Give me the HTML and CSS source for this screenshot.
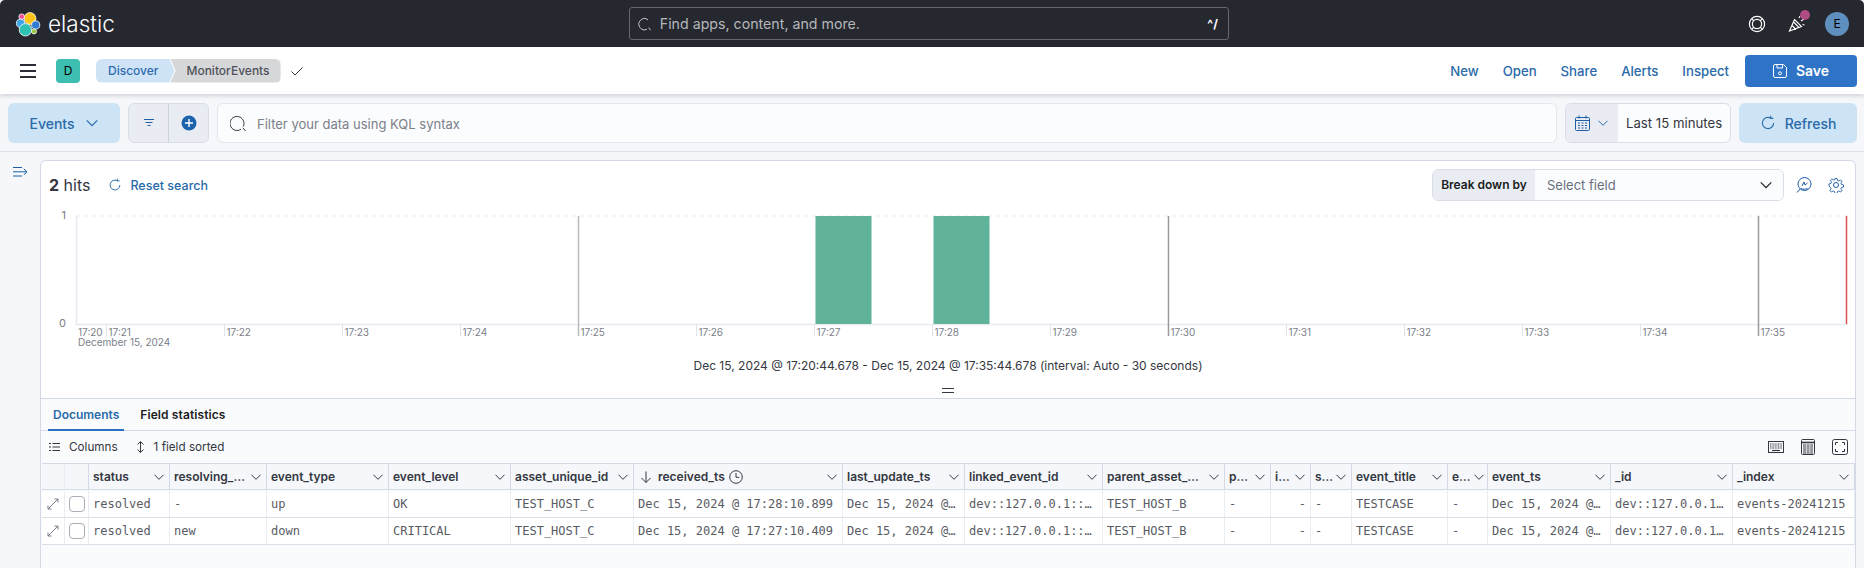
FILE: index.html
```html
<!DOCTYPE html>
<html lang="en">
<head>
  <meta charset="UTF-8">
  <title>Discover - Elastic</title>
  <link rel="stylesheet" href="styles.css">
</head>
<body>
  <svg class="sprites" width="0" height="0">
    <symbol id="chev" viewBox="0 0 12 12"><path d="M1.500 3.800 6 8.300l4.500-4.500" fill="none" stroke="currentColor" stroke-width="1"/></symbol>
    <symbol id="refresh" viewBox="0 0 16 16"><path d="M13.600 8A5.600 5.600 0 1 1 10.500 3M10.700 .8v2.600H13.300" fill="none" stroke="currentColor" stroke-width="1.100"/></symbol>
  </svg>

  <header class="global-bar">
    <div class="brand">
      <svg class="logo" width="26" height="26" viewBox="15 10 26 26">
        <g stroke="#fff" stroke-width=".8">
          <circle cx="30" cy="17.500" r="5.900" fill="#fec514"/>
          <circle cx="21.700" cy="15.700" r="2.800" fill="#f04e98"/>
          <circle cx="20.500" cy="22.300" r="4.100" fill="#3ca5e8"/>
          <circle cx="35.700" cy="24" r="4.100" fill="#2f7dd1"/>
          <circle cx="25.400" cy="28.800" r="6.200" fill="#2fc1b4"/>
          <circle cx="34" cy="30.400" r="2.500" fill="#93c83e"/>
        </g>
      </svg>
      <span class="brand-name">elastic</span>
    </div>
    <div class="global-search">
      <svg width="14" height="14" viewBox="0 0 14 14"><path d="M9 12.200A5.600 5.600 0 1 1 10 2.800M10.600 10.600l2 2.600" fill="none" stroke="#c4c6c9" stroke-width="1"/></svg>
      <span class="global-search-text">Find apps, content, and more.</span>
      <span class="shortcut">^/</span>
    </div>
    <div class="global-icons">
      <svg width="18" height="18" viewBox="0 0 18 18" fill="none" stroke="#fff" stroke-width="1.200"><circle cx="9" cy="9" r="7.600"/><circle cx="9" cy="9" r="4.600"/><path d="M3.700 3.700l2.100 2.100M14.300 3.700l-2.100 2.100M3.700 14.300l2.100-2.100M14.300 14.300l-2.100-2.100"/></svg>
      <span class="news">
        <svg width="18" height="18" viewBox="0 0 18 18" fill="none" stroke="#fff" stroke-width="1.100"><path d="M1.500 16 6.500 4.500l7 7zM4 10.500l4 4M5.500 7l5 5M11 3l1-2M13 6l3-2M14.500 9.500l2 .5"/></svg>
        <span class="news-dot"></span>
      </span>
      <span class="user-avatar">E</span>
    </div>
  </header>

  <nav class="app-bar">
    <button class="menu-btn"><span></span><span></span><span></span></button>
    <span class="space-badge">D</span>
    <div class="crumbs">
      <span class="crumb crumb-first">Discover</span>
      <span class="crumb crumb-last">MonitorEvents</span>
    </div>
    <svg class="crumb-check" width="12" height="12" viewBox="0 0 12 12"><path d="M.5 6.500 4 10 11.500 2.500" fill="none" stroke="#343741" stroke-width="1"/></svg>
    <div class="app-actions">
      <a>New</a><a>Open</a><a>Share</a><a>Alerts</a><a>Inspect</a>
      <button class="save-btn">
        <svg width="14" height="14" viewBox="0 0 14 14" fill="none" stroke="#fff" stroke-width="1"><path d="M.5 2A1.500 1.500 0 0 1 2 .5h8.500l3 3V12a1.500 1.500 0 0 1-1.500 1.500H2A1.500 1.500 0 0 1 .5 12zM4 .5v3.500h5.500V.5"/><circle cx="7" cy="9.300" r="1.500"/></svg>
        Save
      </button>
    </div>
  </nav>

  <section class="query-bar">
    <button class="events-btn">Events <svg width="14" height="14"><use href="#chev"/></svg></button>
    <div class="filter-group">
      <span class="filter-cell">
        <svg width="12" height="12" viewBox="0 0 12 12"><path d="M1 2.500h10M2.500 5.500h7M4.500 8.500h3" stroke="#1d5ea5" stroke-width="1"/></svg>
      </span>
      <span class="filter-cell">
        <svg width="16" height="16" viewBox="0 0 16 16"><circle cx="8" cy="8" r="7.500" fill="#1d64ad"/><path d="M8 4v8M4 8h8" stroke="#fff" stroke-width="1.400"/></svg>
      </span>
    </div>
    <div class="kql-input">
      <svg width="17" height="17" viewBox="0 0 17 17"><path d="M11 14.200A7 7 0 1 1 13.300 11.500M12.800 12.800l2.800 3.200" fill="none" stroke="#343741" stroke-width="1"/></svg>
      <span>Filter your data using KQL syntax</span>
    </div>
    <div class="date-group">
      <span class="date-icon">
        <svg width="15" height="16" viewBox="0 0 15 16" fill="none" stroke="#1d5ea5"><rect x=".5" y="2.500" width="14" height="13" rx="1"/><path d="M.5 5.500h14M4 .5v3M11 .5v3"/><path d="M3 8h2M6.500 8h2M10 8h2M3 10.500h2M6.500 10.500h2M10 10.500h2M3 13h2M6.500 13h2M10 13h2" stroke-width="1.200"/></svg>
        <svg class="date-chev" width="12" height="12"><use href="#chev"/></svg>
      </span>
      <span class="date-text">Last 15 minutes</span>
    </div>
    <button class="refresh-btn"><svg width="16" height="16"><use href="#refresh"/></svg> Refresh</button>
  </section>

  <main class="workspace">
    <aside class="side-toggle">
      <svg width="15" height="12" viewBox="0 0 15 12" fill="none" stroke="#1d5ea5" stroke-width="1"><path d="M0 1.500h9M0 5.800h14M0 10h9M10.800 2.800 14 5.800l-3.200 3"/></svg>
    </aside>
    <div class="panel">
      <div class="hits-row">
        <span class="hits"><b>2</b> hits</span>
        <a class="reset-link"><svg width="14" height="14"><use href="#refresh"/></svg> Reset search</a>
        <div class="breakdown">
          <span class="breakdown-label">Break down by</span>
          <span class="breakdown-select">Select field <svg width="14" height="14"><use href="#chev"/></svg></span>
        </div>
        <svg class="hits-icon" width="16" height="16" viewBox="0 0 16 16" fill="none" stroke="#1d5ea5"><circle cx="8.500" cy="7" r="6.500"/><path d="M1 15.500l3-3.500M6 9l2-4 1 3 2.500-2M5 11.500c2 1 4 1 6.500 0"/></svg>
        <svg class="hits-icon" width="16" height="16" viewBox="0 0 16 16" fill="none" stroke="#1d5ea5"><circle cx="8" cy="8" r="2.500"/><path d="M6.800.8h2.400l.5 2.200 1.400.6 2-1.200 1.600 1.600-1.200 2 .6 1.400 2.200.5v2.400l-2.200.5-.6 1.400 1.200 2-1.600 1.600-2-1.200-1.400.6-.5 2.200H6.800l-.5-2.200-1.400-.6-2 1.200-1.600-1.600 1.200-2-.6-1.400L.2 9.200V6.800l2.200-.5.600-1.400-1.200-2 1.600-1.600 2 1.200 1.400-.6z" transform="translate(.8 .8) scale(.9)"/></svg>
      </div>

      <svg class="chart" width="1814" height="148" viewBox="41 202 1814 148">
        <path class="grid-top" d="M76 216H1848"/>
        <path class="axis" d="M76.500 216V324.500H1848"/>
        <rect class="bar" x="815.500" y="216" width="56" height="108"/>
        <rect class="bar" x="933.500" y="216" width="56" height="108"/>
        <path class="tick" d="M106.500 324v12M224.500 324v12M342.500 324v12M460.500 324v12M696.500 324v12M814.500 324v12M932.500 324v12M1050.500 324v12M1286.500 324v12M1404.500 324v12M1522.500 324v12M1640.500 324v12"/>
        <path class="five-min" d="M578.500 216V336"/>
        <path class="five-min dark" d="M1168.500 216V336"/>
        <path class="five-min dark" d="M1758.500 216V336"/>
        <path class="now-line" d="M1846.500 216V324"/>
        <g class="y-labels">
          <text x="66" y="219">1</text>
          <text x="66" y="327">0</text>
        </g>
        <g class="x-labels">
          <text x="78" y="336">17:20</text>
          <text x="108.500" y="336">17:21</text>
          <text x="226.500" y="336">17:22</text>
          <text x="344.500" y="336">17:23</text>
          <text x="462.500" y="336">17:24</text>
          <text x="580.500" y="336">17:25</text>
          <text x="698.500" y="336">17:26</text>
          <text x="816.500" y="336">17:27</text>
          <text x="934.500" y="336">17:28</text>
          <text x="1052.500" y="336">17:29</text>
          <text x="1170.500" y="336">17:30</text>
          <text x="1288.500" y="336">17:31</text>
          <text x="1406.500" y="336">17:32</text>
          <text x="1524.500" y="336">17:33</text>
          <text x="1642.500" y="336">17:34</text>
          <text x="1760.500" y="336">17:35</text>
          <text x="78" y="346">December 15, 2024</text>
        </g>
      </svg>

      <p class="range-caption">Dec 15, 2024 @ 17:20:44.678 - Dec 15, 2024 @ 17:35:44.678 (interval: Auto - 30 seconds)</p>
      <div class="resize-handle"><span></span></div>

      <div class="results">
        <div class="tabs">
          <a class="tab active">Documents</a>
          <a class="tab">Field statistics</a>
        </div>
        <div class="grid-toolbar">
          <span class="tool">
            <svg width="11" height="10" viewBox="0 0 11 10" stroke="#343741"><path d="M0 1.500h2M0 5h2M0 8.500h2M3.500 1.500H11M3.500 5H11M3.500 8.500H11"/></svg>
            Columns
          </span>
          <span class="tool">
            <svg width="9" height="12" viewBox="0 0 9 12" fill="none" stroke="#343741"><path d="M4.500 1v10M1.500 3.500l3-3 3 3M1.500 8.500l3 3 3-3"/></svg>
            1 field sorted
          </span>
          <div class="tool-right">
            <svg width="16" height="12" viewBox="0 0 16 12" fill="none" stroke="#343741"><rect x=".5" y=".5" width="15" height="11"/><path d="M2 3h12M2 5h12M2 7h12" stroke-dasharray="1 .6" stroke-width="1.200"/><path d="M4 9.500h8" stroke-width="1.200"/></svg>
            <svg width="16" height="16" viewBox="0 0 16 16" fill="none" stroke="#343741"><rect x="1.500" y=".5" width="13" height="15" rx="1"/><path d="M1.500 3.500h13" stroke-width="1.600"/><path d="M3 6h10M3 8h10M3 10h10M3 12h10M3 14h10" stroke-dasharray="3 .6"/></svg>
            <svg width="16" height="16" viewBox="0 0 16 16" fill="none" stroke="#343741"><rect x=".5" y=".5" width="15" height="15" rx="2"/><path d="M3.500 6V3.500H6M10 3.500h2.500V6M12.500 10v2.500H10M6 12.500H3.500V10"/></svg>
          </div>
        </div>

        <div class="data-grid">
          <div class="hd"></div>
          <div class="hd"></div>
          <div class="hd"><span>status</span><svg><use href="#chev"/></svg></div>
          <div class="hd"><span>resolving_…</span><svg><use href="#chev"/></svg></div>
          <div class="hd"><span>event_type</span><svg><use href="#chev"/></svg></div>
          <div class="hd"><span>event_level</span><svg><use href="#chev"/></svg></div>
          <div class="hd"><span>asset_unique_id</span><svg><use href="#chev"/></svg></div>
          <div class="hd hd-sorted">
            <svg class="sort-arrow" viewBox="0 0 12 12"><path d="M6 .5v11M1.500 7 6 11.500 10.500 7" fill="none" stroke="currentColor"/></svg>
            <span>received_ts</span>
            <svg class="clock" viewBox="0 0 14 14"><circle cx="7" cy="7" r="6.300" fill="none" stroke="currentColor"/><path d="M7 3v4.300h3.300" fill="none" stroke="currentColor"/></svg>
            <svg class="push"><use href="#chev"/></svg>
          </div>
          <div class="hd"><span>last_update_ts</span><svg><use href="#chev"/></svg></div>
          <div class="hd"><span>linked_event_id</span><svg><use href="#chev"/></svg></div>
          <div class="hd"><span>parent_asset_…</span><svg><use href="#chev"/></svg></div>
          <div class="hd"><span>p…</span><svg><use href="#chev"/></svg></div>
          <div class="hd"><span>i…</span><svg><use href="#chev"/></svg></div>
          <div class="hd"><span>s…</span><svg><use href="#chev"/></svg></div>
          <div class="hd"><span>event_title</span><svg><use href="#chev"/></svg></div>
          <div class="hd"><span>e…</span><svg><use href="#chev"/></svg></div>
          <div class="hd"><span>event_ts</span><svg><use href="#chev"/></svg></div>
          <div class="hd"><span>_id</span><svg><use href="#chev"/></svg></div>
          <div class="hd"><span>_index</span><svg><use href="#chev"/></svg></div>

          <div class="td td-ctl"><svg width="12" height="12" viewBox="0 0 12 12" fill="none" stroke="#69707d"><path d="M1 11 11 1M1 7.500V11h3.500M7.500 1H11v3.500" stroke-width=".9"/></svg></div>
          <div class="td td-ctl"><span class="check"></span></div>
          <div class="td">resolved</div>
          <div class="td">-</div>
          <div class="td">up</div>
          <div class="td">OK</div>
          <div class="td">TEST_HOST_C</div>
          <div class="td">Dec 15, 2024 @ 17:28:10.899</div>
          <div class="td">Dec 15, 2024 @…</div>
          <div class="td">dev::127.0.0.1::…</div>
          <div class="td">TEST_HOST_B</div>
          <div class="td">-</div>
          <div class="td td-num">-</div>
          <div class="td">-</div>
          <div class="td">TESTCASE</div>
          <div class="td">-</div>
          <div class="td">Dec 15, 2024 @…</div>
          <div class="td">dev::127.0.0.1…</div>
          <div class="td">events-20241215</div>

          <div class="td td-ctl"><svg width="12" height="12" viewBox="0 0 12 12" fill="none" stroke="#69707d"><path d="M1 11 11 1M1 7.500V11h3.500M7.500 1H11v3.500" stroke-width=".9"/></svg></div>
          <div class="td td-ctl"><span class="check"></span></div>
          <div class="td">resolved</div>
          <div class="td">new</div>
          <div class="td">down</div>
          <div class="td">CRITICAL</div>
          <div class="td">TEST_HOST_C</div>
          <div class="td">Dec 15, 2024 @ 17:27:10.409</div>
          <div class="td">Dec 15, 2024 @…</div>
          <div class="td">dev::127.0.0.1::…</div>
          <div class="td">TEST_HOST_B</div>
          <div class="td">-</div>
          <div class="td td-num">-</div>
          <div class="td">-</div>
          <div class="td">TESTCASE</div>
          <div class="td">-</div>
          <div class="td">Dec 15, 2024 @…</div>
          <div class="td">dev::127.0.0.1…</div>
          <div class="td">events-20241215</div>
        </div>
      </div>
    </div>
  </main>
</body>
</html>
```

FILE: styles.css
```css
* {
  box-sizing: border-box;
}
html, body {
  height: 100%;
}
body {
  margin: 0;
  height: 568px;
  overflow: hidden;
  display: flex;
  flex-direction: column;
  font-family: Inter, "Liberation Sans", sans-serif;
  font-size: 14px;
  color: #343741;
  background-color: #f5f7fa;
}
button {
  font-family: inherit;
  border: none;
  cursor: pointer;
}
.sprites {
  position: absolute;
}

/* top dark bar */
.global-bar {
  height: 47px;
  flex: none;
  display: flex;
  align-items: center;
  background-color: #25282f;
  border-radius: 5px 5px 0 0;
  position: relative;
}
.brand {
  display: flex;
  align-items: center;
  margin-left: 15px;
  gap: 7px;
}
.brand-name {
  color: #fff;
  font-size: 22.500px;
  font-weight: 300;
}
.global-search {
  width: 600px;
  height: 33px;
  margin-left: 514px;
  padding: 0 10px 0 8px;
  display: flex;
  align-items: center;
  border: 1px solid #64676c;
  border-radius: 3px;
}
.global-search-text {
  margin-left: 8px;
  color: #b5b7bb;
  font-size: 14.200px;
  flex: 1;
}
.shortcut {
  color: #fff;
  font-size: 12px;
  font-weight: 700;
}
.global-icons {
  margin-left: auto;
  margin-right: 15px;
  display: flex;
  align-items: center;
  gap: 22px;
}
.news {
  position: relative;
  display: flex;
  margin-right: -3px;
}
.news-dot {
  position: absolute;
  top: -5px;
  right: -4px;
  width: 10px;
  height: 10px;
  border-radius: 50%;
  background-color: #b04c84;
}
.user-avatar {
  width: 24px;
  height: 24px;
  border-radius: 50%;
  background-color: #5f8fbf;
  color: #000;
  font-size: 12px;
  line-height: 24px;
  text-align: center;
}

/* white app bar */
.app-bar {
  height: 47px;
  flex: none;
  display: flex;
  align-items: center;
  background-color: #fff;
  box-shadow: 0 2px 4px rgba(52, 55, 65, 0.18);
  position: relative;
}
.menu-btn {
  width: 16px;
  margin-left: 20px;
  padding: 0;
  background: none;
  display: flex;
  flex-direction: column;
  gap: 4px;
}
.menu-btn span {
  height: 2px;
  background-color: #2b2e36;
}
.space-badge {
  width: 24px;
  height: 24px;
  margin-left: 20px;
  border-radius: 4px;
  background-color: #3ebeb0;
  color: #000;
  font-size: 12px;
  line-height: 24px;
  text-align: center;
}
.crumbs {
  display: flex;
  margin-left: 16px;
  font-size: 12px;
}
.crumb {
  height: 24px;
  line-height: 24px;
  font-weight: 500;
}
.crumb-first {
  padding: 0 16px 0 12px;
  color: #2e6bb0;
  background-color: #cfe3f6;
  border-radius: 6px 0 0 6px;
  clip-path: polygon(0 0, calc(100% - 5px) 0, 100% 50%, calc(100% - 5px) 100%, 0 100%);
}
.crumb-last {
  margin-left: -4px;
  padding: 0 11px 0 16px;
  color: #4f525a;
  background-color: #d6d7d9;
  border-radius: 0 6px 6px 0;
  clip-path: polygon(0 0, 100% 0, 100% 100%, 0 100%, 5px 50%);
}
.crumb-check {
  margin-left: 10px;
}
.app-actions {
  margin-left: auto;
  margin-right: 7px;
  display: flex;
  align-items: center;
  gap: 24px;
  font-size: 13.200px;
}
.app-actions a {
  color: #2a6aa9;
  font-weight: 500;
}
.save-btn {
  width: 112px;
  height: 32px;
  margin-left: -8px;
  display: flex;
  align-items: center;
  justify-content: center;
  gap: 9px;
  background-color: #2e73c5;
  color: #fff;
  font-size: 14px;
  font-weight: 600;
  border-radius: 4px;
}

/* query bar */
.query-bar {
  height: 58px;
  flex: none;
  padding: 9px 7px 8px 8px;
  display: flex;
  gap: 8px;
  border-bottom: 1px solid #dcdfe8;
}
.query-bar > * {
  height: 40px;
}
.events-btn {
  width: 112px;
  display: flex;
  align-items: center;
  justify-content: center;
  gap: 10px;
  background-color: #cce4f5;
  color: #2a6aa9;
  font-size: 14px;
  font-weight: 500;
  border-radius: 6px;
}
.filter-group {
  width: 81px;
  display: flex;
  border: 1px solid #d9dde8;
  border-radius: 6px;
  background-color: #e9edf3;
}
.filter-cell {
  flex: 1;
  display: flex;
  align-items: center;
  justify-content: center;
}
.filter-cell + .filter-cell {
  border-left: 1px solid #cfd3e0;
}
.kql-input {
  flex: 1;
  padding: 1px 0 0 12px;
  display: flex;
  align-items: center;
  gap: 10px;
  background-color: #fbfcfd;
  border: 1px solid #e4e7f0;
  border-radius: 6px;
  color: #7c8089;
  font-size: 13px;
}
.date-group {
  width: 166px;
  display: flex;
  align-items: center;
  border: 1px solid #d9dde8;
  border-radius: 6px;
  background-color: #fbfcfd;
  overflow: hidden;
}
.date-icon {
  width: 52px;
  height: 100%;
  padding-left: 9px;
  display: flex;
  align-items: center;
  gap: 7px;
  background-color: #e9edf3;
}
.date-chev {
  color: #2a6aa9;
}
.date-text {
  margin-left: 8px;
  color: #343741;
  font-size: 13.200px;
}
.refresh-btn {
  width: 118px;
  display: flex;
  align-items: center;
  justify-content: center;
  gap: 9px;
  background-color: #cce4f5;
  color: #2a6aa9;
  font-size: 14px;
  font-weight: 500;
  border-radius: 6px;
}

/* main area */
.workspace {
  flex: 1;
  display: flex;
  padding-top: 8px;
  padding-right: 8px;
  min-height: 0;
}
.side-toggle {
  width: 40px;
  flex: none;
  padding: 4px 0 0 13px;
}
.panel {
  flex: 1;
  display: flex;
  flex-direction: column;
  background-color: #fff;
  border: 1px solid #d3dae6;
  border-radius: 6px 6px 0 0;
  border-bottom: none;
  min-width: 0;
}
.hits-row {
  height: 41px;
  flex: none;
  padding: 8px 11px 0 8px;
  display: flex;
  align-items: flex-start;
}
.hits {
  font-size: 16px;
  line-height: 32px;
}
.reset-link {
  margin-left: 18px;
  display: flex;
  align-items: center;
  gap: 8px;
  height: 32px;
  color: #2a6aa9;
  font-size: 12.500px;
  font-weight: 500;
}
.breakdown {
  width: 352px;
  height: 32px;
  margin-left: auto;
  display: flex;
  border: 1px solid #d9dde8;
  border-radius: 6px;
  overflow: hidden;
}
.breakdown-label {
  width: 102px;
  line-height: 30px;
  text-align: center;
  background-color: #e9edf3;
  color: #1a1c21;
  font-size: 12px;
  font-weight: 600;
}
.breakdown-select {
  flex: 1;
  padding: 0 10px 0 12px;
  display: flex;
  align-items: center;
  justify-content: space-between;
  background-color: #fbfcfd;
  color: #69707d;
  font-size: 13px;
}
.breakdown-select svg {
  color: #1a1c21;
}
.hits-icon {
  margin: 8px 0 0 12px;
}
.hits-icon + .hits-icon {
  margin-left: 16px;
}
.chart {
  display: block;
  flex: none;
  font-family: Inter, sans-serif;
}
.grid-top {
  stroke: #e9ebf0;
  stroke-dasharray: 4 4;
  fill: none;
}
.axis {
  stroke: #e8eaf1;
  fill: none;
  stroke-width: 1.5;
}
.bar {
  fill: #60b29b;
}
.tick {
  stroke: #e0e3ea;
}
.five-min {
  stroke: #b9babd;
  stroke-width: 1.5;
}
.five-min.dark {
  stroke: #9a9b9e;
}
.now-line {
  stroke: #d9534f;
  stroke-width: 1.5;
}
.y-labels text {
  fill: #7b8088;
  font-size: 11px;
  text-anchor: end;
}
.x-labels text {
  fill: #7b8088;
  font-size: 10px;
}
.range-caption {
  height: 32px;
  flex: none;
  margin: 0;
  line-height: 32px;
  text-align: center;
  font-size: 12px;
  color: #343741;
}
.resize-handle {
  height: 17px;
  flex: none;
  padding-top: 6px;
  display: flex;
  justify-content: center;
  border-bottom: 1px solid #d3dae6;
}
.resize-handle span {
  width: 12px;
  height: 5px;
  border-top: 1px solid #343741;
  border-bottom: 1px solid #343741;
}

/* docs table */
.results {
  flex: 1;
  background-color: #fafbfd;
}
.tabs {
  height: 32px;
  padding-left: 7px;
  display: flex;
  gap: 11px;
  border-bottom: 1px solid #d3dae6;
}
.tab {
  height: 32px;
  padding: 0 5px;
  line-height: 32px;
  font-size: 12px;
  font-weight: 600;
  color: #1a1c21;
  letter-spacing: .1px;
}
.tab.active {
  color: #2a6aa9;
  border-bottom: 2px solid #2a6fc0;
  letter-spacing: 0;
}
.grid-toolbar {
  height: 32px;
  padding: 0 7px 0 8px;
  display: flex;
  align-items: center;
  gap: 18px;
  font-size: 11.700px;
}
.tool {
  display: flex;
  align-items: center;
  gap: 9px;
}
.tool-right {
  margin-left: auto;
  display: flex;
  align-items: center;
  gap: 16px;
}
.data-grid {
  display: grid;
  grid-template-columns: 23px 24px 81px 97px 122px 122px 123px 209px 122px 138px 122px 46px 40px 41px 96px 40px 123px 122px 122px;
  grid-auto-rows: 27px;
  margin-left: 1px;
  border-top: 1px solid #d3dae6;
  font-size: 12px;
}
.hd {
  height: 26px;
  padding: 0 4px;
  display: flex;
  align-items: center;
  justify-content: space-between;
  gap: 2px;
  background-color: #f5f7fa;
  border-right: 1px solid #d3dae6;
  border-bottom: 1px solid #d3dae6;
  font-weight: 600;
  white-space: nowrap;
  overflow: hidden;
}
.hd svg {
  width: 12px;
  height: 12px;
  flex: none;
  color: #343741;
}
.hd:nth-child(1) {
  border-right-color: #e9edf3;
}
.hd-sorted {
  justify-content: flex-start;
  padding-left: 6px;
}
.hd-sorted .clock {
  width: 14px;
  height: 14px;
  margin-left: 2px;
}
.hd-sorted .sort-arrow {
  margin-right: 4px;
}
.hd-sorted .push {
  margin-left: auto;
}
.td {
  padding: 0 4px;
  display: flex;
  align-items: center;
  height: 27px;
  font-family: "DejaVu Sans Mono", "Liberation Mono", monospace;
  font-size: 12px;
  color: #585b63;
  background-color: #fff;
  border-right: 1px solid #e9edf3;
  border-bottom: 1px solid #d9dee8;
  white-space: nowrap;
  overflow: hidden;
}
.td-num {
  justify-content: flex-end;
}
.td-ctl {
  justify-content: center;
  padding: 0;
}
.check {
  width: 16px;
  height: 16px;
  border: 1px solid #a9adb6;
  border-radius: 4px;
  background-color: #fff;
}
```
